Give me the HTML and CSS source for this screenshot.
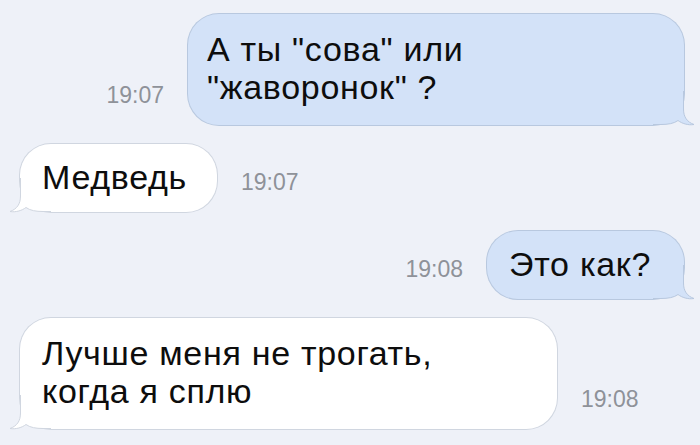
FILE: index.html
```html
<!DOCTYPE html>
<html lang="ru">
<head>
<meta charset="UTF-8">
<title>Сообщения</title>
<meta name="viewport" content="width=device-width, initial-scale=1.0">
<link rel="stylesheet" href="styles.css">
</head>
<body>
<div class="chat">

  <!-- исходящее -->
  <div class="row out">
    <span class="time">19:07</span>
    <div class="bubble sent question">
      А ты "сова" или<br>"жаворонок" ?
      <svg class="tail" width="42" height="35" viewBox="0 0 42 35">
        <path class="tail-fill" d="M0 0 L30.5 0 L30.5 18 C30.5 26 34 31 41 33.5 C35 34.5 29 32.5 25 29.5 C21 32.5 15 33.5 8 33.5 L0 33.5 Z"/>
        <path class="tail-line" d="M30.5 0 L30.5 18 C30.5 26 34 31 41 33.5 C35 34.5 29 32.5 25 29.5 C21 32.5 15 33.5 8 33.5 L0 33.5"/>
      </svg>
    </div>
  </div>

  <!-- входящее -->
  <div class="row in">
    <div class="bubble received">
      Медведь
      <svg class="tail" width="42" height="35" viewBox="0 0 42 35">
        <path class="tail-fill" d="M0 0 L30.5 0 L30.5 18 C30.5 26 34 31 41 33.5 C35 34.5 29 32.5 25 29.5 C21 32.5 15 33.5 8 33.5 L0 33.5 Z"/>
        <path class="tail-line" d="M30.5 0 L30.5 18 C30.5 26 34 31 41 33.5 C35 34.5 29 32.5 25 29.5 C21 32.5 15 33.5 8 33.5 L0 33.5"/>
      </svg>
    </div>
    <span class="time">19:07</span>
  </div>

  <div class="row out">
    <span class="time">19:08</span>
    <div class="bubble sent">
      Это как?
      <svg class="tail" width="42" height="35" viewBox="0 0 42 35">
        <path class="tail-fill" d="M0 0 L30.5 0 L30.5 18 C30.5 26 34 31 41 33.5 C35 34.5 29 32.5 25 29.5 C21 32.5 15 33.5 8 33.5 L0 33.5 Z"/>
        <path class="tail-line" d="M30.5 0 L30.5 18 C30.5 26 34 31 41 33.5 C35 34.5 29 32.5 25 29.5 C21 32.5 15 33.5 8 33.5 L0 33.5"/>
      </svg>
    </div>
  </div>

  <div class="row in">
    <div class="bubble received answer">
      Лучше меня не трогать,<br>когда я сплю
      <svg class="tail" width="42" height="35" viewBox="0 0 42 35">
        <path class="tail-fill" d="M0 0 L30.5 0 L30.5 18 C30.5 26 34 31 41 33.5 C35 34.5 29 32.5 25 29.5 C21 32.5 15 33.5 8 33.5 L0 33.5 Z"/>
        <path class="tail-line" d="M30.5 0 L30.5 18 C30.5 26 34 31 41 33.5 C35 34.5 29 32.5 25 29.5 C21 32.5 15 33.5 8 33.5 L0 33.5"/>
      </svg>
    </div>
    <span class="time">19:08</span>
  </div>

</div>
</body>
</html>
```

FILE: styles.css
```css
html, body {
margin: 0;
padding: 0;
height: 100%;
background: #eef1f8;
}
body {
font-family: "Liberation Sans", Arial, sans-serif;
color: #0d0d0d;
overflow: hidden;
}
.chat {
display: flex;
flex-direction: column;
gap: 19px;
padding: 14px 16px 0 20px;
}
.row {
display: flex;
align-items: flex-end;
}
.row.out { justify-content: flex-end; }

.time {
font-size: 23px;
line-height: 1;
color: #8e9299;
padding-bottom: 18px;
margin: 0 24px;
}

/* пузыри */
.bubble {
position: relative;
z-index: 0;
font-size: 34px;
letter-spacing: 0.7px;
line-height: 38px;
padding: 14px 33px 16px 22px;
border-radius: 31px;
}
.bubble.sent {
background: #d3e2f8;
box-shadow: 0 0 0 1px #b8c8df;
}
.bubble.received {
background: #fff;
box-shadow: 0 0 0 1px #d0d6e0;
padding-right: 30px;
}
.bubble.question {
box-sizing: border-box;
width: 496px;
padding-left: 19px;
padding-top: 16px;
padding-bottom: 19px;
}
.bubble.answer {
box-sizing: border-box;
width: 537px;
padding-top: 16px;
padding-bottom: 19px;
}

/* хвостик — под текстом, поверх фона пузыря */
.tail {
position: absolute;
z-index: -1;
bottom: -1px;
display: block;
overflow: visible;
}
.sent .tail { right: -11px; }
.received .tail { left: -11px; transform: scaleX(-1); }
.tail-line {
fill: none;
stroke-width: 1;
}
.sent .tail-fill { fill: #d3e2f8; }
.sent .tail-line { stroke: #b8c8df; }
.received .tail-fill { fill: #fff; }
.received .tail-line { stroke: #d0d6e0; }
```
